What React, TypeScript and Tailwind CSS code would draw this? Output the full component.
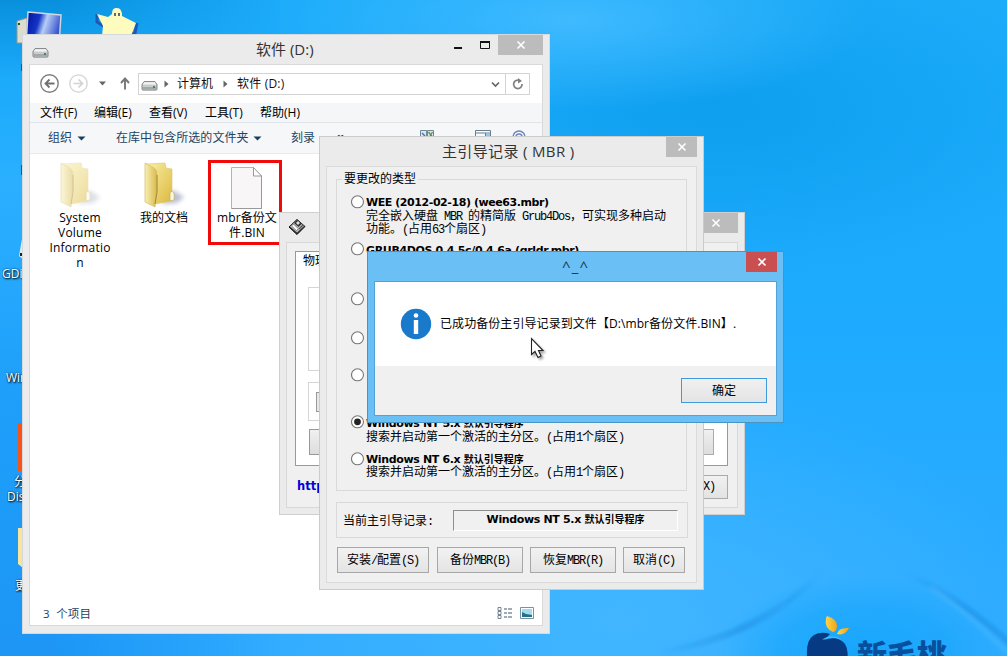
import type { ReactNode } from "react";

const UI = "font-['Open_Sans','Noto_Sans_CJK_SC',sans-serif]";
const SONG = "font-['Liberation_Serif','Noto_Sans_CJK_SC',serif]";
const BOLD = "font-['DejaVu_Sans','Noto_Sans_CJK_SC',sans-serif] font-bold";

function Cross({ className }: { className: string }) {
  return (
    <div className={`flex items-center justify-center ${className}`}>
      <svg width="10" height="10" viewBox="0 0 10 10" fill="none" stroke="#fff" strokeWidth="1.6">
        <path d="M1.500 1.500 8.500 8.500M8.500 1.500 1.500 8.500" />
      </svg>
    </div>
  );
}

/* Half-width characters of the dialog face: 6px per character. */
function Mono({ children }: { children: ReactNode }) {
  return <span className="whitespace-pre font-['Liberation_Mono',monospace] text-[12px] tracking-[-1.200px]">{children}</span>;
}

function Drive() {
  return (
    <svg width="17" height="10" viewBox="0 0 17 10" className="shrink-0">
      <path d="M3 .6h11l2 3v4.500q0 1-1 1H2q-1 0-1-1V3.600z" fill="#c9cccd" stroke="#74797b" strokeWidth=".9" />
      <path d="M3 1.300h11l1 2.200H2z" fill="#f3f4f4" />
      <path d="M2 6h13v2H2z" fill="#a4a8a9" />
      <path d="M12 5h2v2h-2z" fill="#3f8a55" />
    </svg>
  );
}

function Folder({ faded }: { faded?: boolean }) {
  return (
    <svg width="46" height="46" viewBox="0 0 46 46" className={faded ? "opacity-50" : ""}>
      <defs>
        <linearGradient id="flap" x1="0" y1="0" x2="1" y2="0">
          <stop offset="0" stopColor="#f9efae" />
          <stop offset="1" stopColor="#d8b94f" />
        </linearGradient>
        <linearGradient id="inside" x1="0" y1="0" x2="1" y2="1">
          <stop offset="0" stopColor="#faf0a4" />
          <stop offset="1" stopColor="#dcb940" />
        </linearGradient>
        <filter id="soft" x="-50%" y="-50%" width="200%" height="200%">
          <feGaussianBlur stdDeviation="2" />
        </filter>
      </defs>
      <path d="M20 42 32 28 43 35 36 41z" fill="#8e97b5" opacity=".6" filter="url(#soft)" />
      <path d="M5 2 24 1 25 6 31 7V39L14 42 5 39z" fill="url(#inside)" stroke="#dcc676" strokeWidth=".6" />
      <path d="M4 1 13 6Q16 8 16 12V30L14 45 4 40z" fill="url(#flap)" stroke="#d4bb68" strokeWidth=".7" />
      <path d="M16 13V30L14 42" fill="none" stroke="#9e832f" strokeWidth=".9" />
      <path d="M31 29q3 1 2 9l-4 1V31z" fill="#faf5dc" stroke="#c5aa51" strokeWidth=".6" />
    </svg>
  );
}

function Caret() {
  return (
    <svg width="9" height="5" viewBox="0 0 9 5">
      <path d="M.5.5h8l-4 4z" fill="#1f3d5c" />
    </svg>
  );
}

function Tri() {
  return (
    <svg width="5" height="8" viewBox="0 0 5 8" className="shrink-0">
      <path d="M.5.5v7l4-3.500z" fill="#666" />
    </svg>
  );
}

function Explorer() {
  return (
    <section className={`absolute left-[22px] top-[34px] flex h-[600px] w-[528px] flex-col border border-[#d5d9dc] bg-[#ebebeb] px-[6px] pb-[7px] ${UI}`}>
      <header className="flex h-[29px] shrink-0 items-start">
        <div className="w-[227px] pl-[3px] pt-[13px]"><Drive /></div>
        <h1 className="w-[196px] whitespace-nowrap pt-[4px] text-[15px] font-normal leading-[20px] tracking-normal text-[#333]">软件 (D:)</h1>
        <svg width="46" height="20" viewBox="0 0 46 20" className="shrink-0">
          <path d="M2 13h8" stroke="#111" strokeWidth="2" />
          <path d="M28.500 7h9v6.500h-9z" fill="none" stroke="#111" />
          <path d="M28 7h10" stroke="#111" strokeWidth="2" />
        </svg>
        <Cross className="h-[20px] w-[45px] shrink-0 bg-[#bcbcbc]" />
      </header>
      <div className="flex min-h-0 flex-1 flex-col border border-[#d9d9d9] bg-white">
        <nav className="flex h-[38px] shrink-0 items-center pl-[8px]">
          <svg width="101" height="22" viewBox="0 0 101 22" fill="none" className="shrink-0">
            <circle cx="11.500" cy="10.500" r="8.700" stroke="#7d7d7d" strokeWidth="1.400" />
            <path d="M16.500 10.500H8M11.500 6.500l-4 4 4 4" stroke="#707070" strokeWidth="1.800" />
            <circle cx="40.500" cy="10.500" r="8.700" stroke="#d2d2d2" strokeWidth="1.300" />
            <path d="M35.500 10.500h9M40.500 6.500l4 4-4 4" stroke="#d2d2d2" strokeWidth="1.700" />
            <path d="M61 8.500h7l-3.500 4z" fill="#666" />
            <path d="M87 16.500V6M83 10l4-4.500L91 10" stroke="#777" strokeWidth="1.900" />
          </svg>
          <div className="-ml-px flex h-[22px] w-[392px] items-center border border-[#d4d4d4] text-[12px] text-[#111]">
            <div className="flex w-[366px] items-center pl-[2px]">
              <span className="pt-[4px]"><Drive /></span>
              <span className="ml-[6px]"><Tri /></span>
              <span className="ml-[8px] w-[46px] whitespace-nowrap leading-5">计算机</span>
              <Tri />
              <span className="ml-[9px] flex-1 whitespace-nowrap leading-5 tracking-[0.200px]">软件 (D:)</span>
              <svg width="9" height="7" viewBox="0 0 9 7" fill="none" className="mr-[5px]">
                <path d="M1 1.500 4.500 5 8 1.500" stroke="#666" strokeWidth="1.700" />
              </svg>
            </div>
            <div className="flex h-full flex-1 items-center justify-center border-l border-[#d4d4d4]">
              <svg width="12" height="12" viewBox="0 0 12 12" fill="none">
                <path d="M7.500 2.500A4.200 4.200 0 1 0 10 6" stroke="#808080" strokeWidth="1.700" />
                <path d="M6 0v5.500L10 3z" fill="#808080" />
              </svg>
            </div>
          </div>
        </nav>
        <div className="flex h-[20px] shrink-0 items-center border-b border-[#dfe5ea] bg-[#f4f6f7] pl-[10px] text-[12px] leading-5 text-black">
          <span className="w-[54px] whitespace-nowrap">文件(F)</span>
          <span className="w-[55px] whitespace-nowrap">编辑(E)</span>
          <span className="w-[56px] whitespace-nowrap">查看(V)</span>
          <span className="w-[55px] whitespace-nowrap">工具(T)</span>
          <span className="whitespace-nowrap">帮助(H)</span>
        </div>
        <div className="flex h-[31px] shrink-0 items-center border-b border-[#e5ebf0] bg-[#f5f7f9] pl-[18px] text-[12px] leading-5 text-[#26435f]">
          <span className="w-[29px] whitespace-nowrap">组织</span>
          <Caret />
          <span className="ml-[30px] w-[137px] whitespace-nowrap tracking-[0.050px]">在库中包含所选的文件夹</span>
          <Caret />
          <span className="ml-[29px] w-[46px] whitespace-nowrap">刻录</span>
          <span className="-mt-[3px] w-[83px] text-[14px] font-bold">»</span>
          <svg width="110" height="16" viewBox="0 0 110 16" fill="none" className="shrink-0">
            <path d="M.5.500h6v10h-6zM7.500.500h6v10h-6z" fill="#dce8ee" stroke="#6f8799" />
            <path d="m2 3 3 3" stroke="#3f78b5" strokeWidth="1.500" />
            <path d="M8.500 2l4 5M12.500 2l-3 5" stroke="#5a9141" strokeWidth="1.300" />
            <path d="M55.500.500h15v10h-15z" fill="#f4fafd" stroke="#6b7e90" />
            <path d="M56 3h14M65.500 3v8" stroke="#6b7e90" />
            <path d="M66 4h4v6h-4z" fill="#8ccaf0" />
            <circle cx="99" cy="7" r="6" stroke="#7186c2" strokeWidth="1.500" />
            <circle cx="99" cy="7" r="3" stroke="#7186c2" strokeWidth="1.500" />
          </svg>
        </div>
        <div className="flex min-h-0 flex-1 items-start pl-[18px] text-center text-[12px] leading-[15px] text-black">
          <figure className="flex w-[64px] flex-col items-center pt-[8px]">
            <Folder faded />
            <figcaption className="mt-[2px] tracking-[0.2px]">System<br />Volume<br />Informatio<br />n</figcaption>
          </figure>
          <figure className="ml-[20px] flex w-[64px] flex-col items-center pt-[8px]">
            <Folder />
            <figcaption className="mt-[2px] whitespace-nowrap">我的文档</figcaption>
          </figure>
          <figure className="ml-[12px] mt-[6px] flex h-[85px] w-[74px] flex-col items-center border-[3px] border-[#f00a0a] pt-[3px]">
            <svg width="34" height="44" viewBox="0 0 34 44" className="ml-[3px] shrink-0">
              <path d="M1.500 1.500H23.500L31.500 10V42.500h-30z" fill="#f8f6f7" stroke="#b4b4b4" />
              <path d="M31.500 10V42.500h-30" fill="none" stroke="#999" />
              <path d="M23.500 1.500V10h8z" fill="#fff" stroke="#999" />
            </svg>
            <figcaption className="whitespace-nowrap pl-[4px] tracking-[0.100px]">mbr备份文<br />件.BIN</figcaption>
          </figure>
        </div>
        <footer className="flex h-[25px] shrink-0 items-center pl-[13px] text-[11.500px] leading-5 text-[#26405c]">
          <span className="w-[454px] whitespace-nowrap pt-[2px] tracking-[0.200px]">3&nbsp; 个项目</span>
          <svg width="38" height="14" viewBox="0 0 38 14" fill="none">
            <path d="M1 1.500h3v3H1zM1 5.500h3v3H1zM1 9.500h3v3H1z" stroke="#667789" strokeWidth=".9" />
            <path d="M7 3h3M11 3h4M7 7h3M11 7h4M7 11h3M11 11h4" stroke="#43566b" />
            <path d="M23.500 1.500h13v11h-13z" fill="#fff" stroke="#7593a6" />
            <path d="M25 3h10v8H25z" fill="#a0dcf4" />
            <path d="m25 6 4 2 6 1v2H25z" fill="#28717e" />
          </svg>
        </footer>
      </div>
    </section>
  );
}

function DiskTool() {
  return (
    <section className={`absolute left-[279px] top-[212px] flex h-[303px] w-[466px] flex-col border border-[#cfcfcf] bg-[#ebebeb] px-[6px] pb-[6px] ${SONG}`}>
      <header className="flex h-[29px] shrink-0 justify-between">
        <svg width="18" height="18" viewBox="0 0 18 18" className="ml-[2px] mt-[5px]">
          <path d="M1 9 9 1.500 17 8.500 9 16.500z" fill="#333" stroke="#111" strokeWidth="1" />
          <path d="m2 8.500 7-6.500 7 6-7 6.500z" fill="#c4c4c4" />
          <path d="m6 5 3-3.200 5 4L10.500 9z" fill="#333" />
          <path d="m8 5 2-2 2 2-2 2z" fill="#ddd" />
          <path d="m3.500 8 2-2 5 4.800-2 2z" fill="#fafafa" stroke="#555" strokeWidth=".7" />
          <path d="m11 11 4-4" stroke="#555" strokeWidth="1.200" />
        </svg>
        <Cross className="h-[20px] w-[45px] bg-[#bcbcbc]" />
      </header>
      <div className="flex flex-1 flex-col border border-[#d8d8d8] bg-[#f0f0f0] pl-[8px] pr-[9px] pt-[8px]">
        <div className="flex h-[215px] shrink-0 flex-col border border-[#999] bg-white px-[12px] text-[12px] leading-[16px]">
          <span className="-ml-[5px] h-[35px] pt-[1px]">物理磁盘</span>
          <div className="h-[84px] shrink-0 border border-[#d5d5d5]" />
          <div className="mt-[11px] flex h-[39px] shrink-0 items-center border border-[#d5d5d5] pl-[7px]">
            <div className="h-[20px] w-[60px] border border-[#999] bg-[#e8e8e8]" />
          </div>
          <div className="mt-[8px] flex h-[26px] shrink-0 justify-between">
            <div className="ml-[1px] w-[80px] border border-[#999] bg-gradient-to-b from-[#f0f0f0] to-[#ddd]" />
            <div className="mr-[1px] w-[80px] border border-[#aaa] bg-gradient-to-b from-[#f0f0f0] to-[#ddd]" />
          </div>
        </div>
        <div className="flex h-[41px] items-center justify-between">
          <span className={`ml-[2px] text-[11.500px] text-[#0000d8] ${BOLD}`}>http://</span>
          <span className="flex h-[24px] w-[90px] items-center justify-end border border-[#aaa] bg-gradient-to-b from-[#f1f1f1] to-[#e3e3e3] pr-[12px] text-[12px]">退出<Mono>(X)</Mono></span>
        </div>
      </div>
    </section>
  );
}

function Radio({ height, checked, children }: { height: string; checked?: boolean; children?: ReactNode }) {
  return (
    <div className={`flex shrink-0 items-start ${height}`}>
      <svg width="14" height="14" viewBox="0 0 14 14" className="mr-[2px] shrink-0">
        <circle cx="6.500" cy="6.800" r="6" fill="#fff" stroke="#777" strokeWidth="1.100" />
        {checked && <circle cx="6.500" cy="6.800" r="3.400" fill="#222" />}
      </svg>
      <div className="-ml-px whitespace-nowrap">{children}</div>
    </div>
  );
}

function NtLabel({ version }: { version: string }) {
  return (
    <span className={`text-[11px] tracking-[-0.350px] ${BOLD}`}>
      Windows NT {version} <span className="text-[10px] tracking-normal">默认引导程序</span>
    </span>
  );
}

function BootSector() {
  return (
    <p className="text-[12px] leading-[12px]">
      搜索并启动第一个激活的主分区。<Mono>(</Mono>占用<Mono>1</Mono>个扇区<Mono>)</Mono>
    </p>
  );
}

function MbrButton({ width, children }: { width: string; children: ReactNode }) {
  return (
    <button className={`h-[26px] whitespace-nowrap border border-[#a7a7a7] bg-gradient-to-b from-[#f2f2f2] to-[#e4e4e4] text-[12px] leading-[22px] ${width}`}>
      {children}
    </button>
  );
}

function MbrWindow() {
  return (
    <section className={`absolute left-[319px] top-[136px] flex h-[454px] w-[385px] flex-col border border-[#cbcbcb] bg-[#ebebeb] px-[6px] pb-[6px] text-black ${SONG}`}>
      <header className="flex h-[29px] shrink-0 items-start">
        <h2 className={`w-[340px] whitespace-nowrap pl-[116px] pt-[4px] text-[15px] font-normal leading-[20px] tracking-[0.350px] text-[#333] ${UI}`}>主引导记录 ( MBR )</h2>
        <Cross className="h-[20px] w-[31px] shrink-0 bg-[#bcbcbc]" />
      </header>
      <div className="flex flex-1 flex-col border border-[#dadada] bg-[#f0f0f0] pl-[9px] pt-[12px]">
        <fieldset className="flex h-[312px] w-[351px] shrink-0 flex-col border border-[#d9d9d9] pl-[14px]">
          <span className="-ml-[9px] -mt-[9px] mb-[7px] w-fit bg-[#f0f0f0] px-[2px] text-[12px] leading-[17px]">要更改的类型</span>
          <Radio height="h-[47px]">
            <p className={`text-[11px] leading-[15px] tracking-[-0.430px] ${BOLD}`}>WEE (2012-02-18) (wee63.mbr)</p>
            <div className="text-[12px] leading-[12px]">
              <p>完全嵌入硬盘<Mono> MBR </Mono>的精简版<Mono> Grub4Dos</Mono>，可实现多种启动</p>
              <p>功能。<Mono>(</Mono>占用<Mono>63</Mono>个扇区<Mono>)</Mono></p>
            </div>
          </Radio>
          <Radio height="h-[50px]">
            <p className={`text-[11px] leading-[17px] tracking-[-0.350px] ${BOLD}`}>GRUB4DOS 0.4.5c/0.4.6a (grldr.mbr)</p>
          </Radio>
          <Radio height="h-[39px]" />
          <Radio height="h-[37px]" />
          <Radio height="h-[47px]" />
          <Radio height="h-[37px]" checked>
            <p className="h-[16px] leading-[14px]"><NtLabel version="5.x" /></p>
            <BootSector />
          </Radio>
          <Radio height="h-[37px]">
            <p className="h-[14px] leading-[12px]"><NtLabel version="6.x" /></p>
            <BootSector />
          </Radio>
        </fieldset>
        <div className="mt-[11px] flex h-[36px] w-[352px] shrink-0 items-center border border-[#d9d9d9] pl-[6px]">
          <span className="w-[110px] whitespace-nowrap pt-[2px] text-[12px] leading-[16px]">当前主引导记录<Mono>:</Mono></span>
          <div className="flex h-[21px] w-[225px] items-center justify-center border border-b-white border-l-[#8e8e8e] border-r-white border-t-[#8e8e8e] leading-[16px]">
            <NtLabel version="5.x" />
          </div>
        </div>
        <div className="mt-[9px] flex">
          <MbrButton width="w-[92px] ml-px mr-[8px]">安装<Mono>/</Mono>配置<Mono>(S)</Mono></MbrButton>
          <MbrButton width="w-[86px] mr-[7px]">备份<Mono>MBR(B)</Mono></MbrButton>
          <MbrButton width="w-[86px] mr-[7px]">恢复<Mono>MBR(R)</Mono></MbrButton>
          <MbrButton width="w-[62px]">取消<Mono>(C)</Mono></MbrButton>
        </div>
      </div>
    </section>
  );
}

function MessageBox() {
  return (
    <section className={`absolute left-[367px] top-[251px] flex h-[172px] w-[417px] flex-col border border-[#4794c5] bg-[#6abff5] px-[6px] pb-[6px] text-black ${UI}`}>
      <header className="flex h-[29px] shrink-0 items-start">
        <h2 className="w-[372px] pl-[188px] pt-[4px] text-[15px] font-normal leading-[20px] tracking-[1.200px] text-[#16374d]">^_^</h2>
        <Cross className="h-[20px] w-[31px] shrink-0 bg-[#c94f51]" />
      </header>
      <div className="flex flex-1 flex-col border border-[#4fa3d8] bg-[#f0f0f0]">
        <div className="flex h-[84px] shrink-0 items-center bg-white pl-[25px]">
          <svg width="32" height="32" viewBox="0 0 32 32" className="shrink-0">
            <circle cx="16" cy="16" r="15.200" fill="#1979ca" />
            <circle cx="16" cy="7.500" r="2.300" fill="#fff" />
            <path d="M13.800 12h4.400v14h-4.400z" fill="#fff" />
          </svg>
          <p className="ml-[8px] whitespace-nowrap text-[12px] leading-5 tracking-[0.070px]">已成功备份主引导记录到文件【D:\mbr备份文件.BIN】.</p>
        </div>
        <div className="flex flex-1 items-center justify-end pr-[9px]">
          <button className="h-[25px] w-[86px] border border-[#3e9ada] bg-gradient-to-b from-[#f0f0f0] to-[#e4e4e4] text-[12px] leading-[21px]">确定</button>
        </div>
      </div>
    </section>
  );
}

function Desktop() {
  return (
    <svg width="1007" height="656" viewBox="0 0 1007 656" className="absolute left-0 top-0">
      <defs>
        <linearGradient id="screen" x1="0" y1="0" x2="1" y2=".3">
          <stop offset="0" stopColor="#0010a0" />
          <stop offset=".4" stopColor="#1535c4" />
          <stop offset=".6" stopColor="#b6cdf8" />
          <stop offset="1" stopColor="#3a56ce" />
        </linearGradient>
        <linearGradient id="leaf" x1="0" y1="0" x2="1" y2="0">
          <stop offset="0" stopColor="#ffd54a" />
          <stop offset="1" stopColor="#eda51b" />
        </linearGradient>
        <linearGradient id="ridgeLeft" gradientUnits="userSpaceOnUse" x1="660" y1="0" x2="825" y2="0">
          <stop offset="0" stopColor="#1583da" stopOpacity="0" />
          <stop offset=".5" stopColor="#1583da" stopOpacity=".6" />
          <stop offset="1" stopColor="#1583da" stopOpacity="0" />
        </linearGradient>
        <linearGradient id="ridgeRight" gradientUnits="userSpaceOnUse" x1="905" y1="0" x2="1007" y2="0">
          <stop offset="0" stopColor="#1583da" stopOpacity="0" />
          <stop offset=".6" stopColor="#1583da" stopOpacity=".6" />
          <stop offset="1" stopColor="#1583da" stopOpacity=".6" />
        </linearGradient>
        <radialGradient id="hill">
          <stop offset="0" stopColor="#12a4fc" stopOpacity=".9" />
          <stop offset=".6" stopColor="#16a6fc" stopOpacity=".6" />
          <stop offset="1" stopColor="#1ca8fc" stopOpacity="0" />
        </radialGradient>
        <filter id="haze" x="-20%" y="-30%" width="140%" height="160%">
          <feGaussianBlur stdDeviation="2" />
        </filter>
      </defs>
      <ellipse cx="865" cy="656" rx="150" ry="82" fill="url(#hill)" />
      <path d="M17 21 27 18V43H17z" fill="#ddddcf" stroke="#97978a" />
      <path d="M18 23h2v2h-2z" fill="#252" />
      <path d="m28 12 33 3-2 30H26z" fill="url(#screen)" stroke="#cfd6de" strokeWidth="1.500" />
      <path d="M97 14v8l8 5M137 23l-2 10-7 3" fill="none" stroke="#1e58b5" strokeWidth="3" />
      <path d="M97 14 108 17 112 14Q112 7 117 8 122 8 122 16L136 23 131 36H102L103 26z" fill="#fdfbbd" />
      <path d="M115 13v3M119 13v3" stroke="#333a66" strokeWidth="1.500" />
      <path d="M22 64v7M22 165v10" stroke="#0b5cab" strokeWidth="2" fill="none" />
      <path d="m23 233-4 23 4 3z" fill="#dcebf4" />
      <path d="M20 253h3v3h-3z" fill="#222" />
      <path d="M18 423h5v48h-5z" fill="#f65317" />
      <path d="M18 528h5v40l-5-4z" fill="#f8e59b" />
      <g fill="none" filter="url(#haze)">
        <path d="M660 652Q760 636 822 572" stroke="url(#ridgeLeft)" strokeWidth="5" />
        <path d="M905 575Q945 586 1012 645" stroke="url(#ridgeRight)" strokeWidth="4" />
        <path d="M930 588Q955 602 1007 652" stroke="#5cc4ff" strokeWidth="3" opacity=".45" />
      </g>
      <path d="M827 616Q837 619 837 626 837 631 833 632 824 628 826 618z" fill="url(#leaf)" />
      <path d="M837 634Q839 627 849 628 845 636 837 634z" fill="url(#leaf)" />
      <path d="M807 656Q806 640 814 635 821 631 830 634L824 640Q838 635 845 644 849 650 847 660H807z" fill="#063a82" />
      <path d="M822 640Q827 635 837 637L844 642Q837 636 828 638z" fill="#65b9f0" />
    </svg>
  );
}

const LABEL = "absolute overflow-hidden whitespace-nowrap text-[12px] leading-[16px] text-white [text-shadow:1px_1px_2px_#000,0_0_2px_#124]";

export default function App() {
  return (
    <main className={`relative h-[656px] w-[1007px] overflow-hidden bg-[radial-gradient(ellipse_300px_90px_at_570px_20px,#3fbaff_0%,transparent_100%),radial-gradient(ellipse_380px_170px_at_720px_110px,#0e9fef_0%,transparent_100%),radial-gradient(ellipse_420px_240px_at_620px_620px,#42b6ff_0%,transparent_100%),linear-gradient(180deg,#1cacfa_0%,#1eabff_50%,#30abff_100%)] ${UI}`}>
      <div className="absolute left-0 top-0 h-full w-[280px] bg-[linear-gradient(180deg,#0890dc_0%,#1caafb_12%,#2ab0ff_28%,#1e9ffa_60%,#1d96f6_100%)] [mask-image:linear-gradient(90deg,#000_20%,transparent)]" />
      <Desktop />
      <span className={`${LABEL} left-[2px] top-[266px]`}>GDisk</span>
      <span className={`${LABEL} left-[6px] top-[370px]`}>Win</span>
      <span className={`${LABEL} left-[14px] top-[474px]`}>分区</span>
      <span className={`${LABEL} left-[7px] top-[489px]`}>Disk</span>
      <span className={`${LABEL} left-[15px] top-[578px]`}>更多</span>
      <span className="absolute left-[857px] top-[635px] whitespace-nowrap font-['Noto_Sans_CJK_SC',sans-serif] text-[30px] font-black leading-[36px] text-[#07509d]">新毛桃</span>
      <Explorer />
      <DiskTool />
      <MbrWindow />
      <MessageBox />
      <svg width="18" height="24" viewBox="0 0 18 24" className="absolute left-[530px] top-[337px] drop-shadow-[2px_2px_1px_rgba(0,0,0,0.35)]">
        <path d="M1.500 1.500V17.500L5 14.500 8 20.500 11 19 8.500 13.500H13z" fill="#fff" stroke="#222" strokeWidth="1.100" />
      </svg>
    </main>
  );
}
